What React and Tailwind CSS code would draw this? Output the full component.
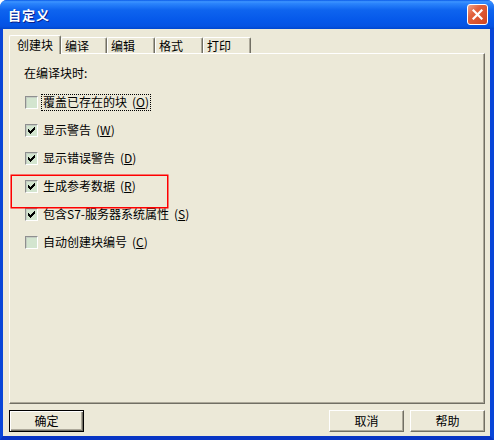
import React from "react";

const FONT = { fontFamily: '"Noto Sans CJK SC", "Noto Sans", sans-serif' };

function Check() {
  const cols = [
    [3, 5], [4, 6], [5, 7], [6, 6], [7, 5], [8, 4], [9, 3],
  ];
  return (
    <svg width="13" height="13" viewBox="0 0 13 13" className="absolute left-[-1px] top-[-1px]" shapeRendering="crispEdges">
      {cols.map(([x, y]) => (
        <rect key={x} x={x} y={y} width="1" height="3" fill="#000" />
      ))}
    </svg>
  );
}

function Box({ checked }) {
  return (
    <div className="relative w-[13px] h-[13px] shrink-0 border border-t-[#8e8f8f] border-l-[#8e8f8f] border-r-white border-b-white bg-[#d3e5cf] shadow-[inset_1px_1px_0_#c4cdc2]">
      {checked && <Check />}
    </div>
  );
}

function Row({ checked, label, k, focus }) {
  return (
    <div className="h-[28px] flex items-center pl-[15px]">
      <Box checked={checked} />
      <div
        className={
          "ml-[4px] h-[15px] flex items-center px-[1px] leading-none " +
          (focus ? "outline-1 outline-dotted outline-black" : "")
        }
      >
        <span>{label}</span>
        <span className="ml-[5px]">
          (<u>{k}</u>)
        </span>
      </div>
    </div>
  );
}

function Tab({ label, selected, w }) {
  return (
    <div
      className={
        "relative flex items-center border-t border-l border-white border-r border-r-[#716f64] rounded-tl-[2px] rounded-tr-[2px] bg-[#ece9d8] " +
        (selected
          ? "h-[19px] -mb-px z-10 pl-[7px] shadow-[inset_-1px_0_0_#aca899]"
          : "h-[16px] pl-[3px] shadow-[inset_-1px_0_0_#aca899]")
      }
      style={{ width: w }}
    >
      <span className="text-[12px] leading-none">{label}</span>
    </div>
  );
}

function Btn({ label, def }) {
  return (
    <div
      className={
        "w-[75px] h-[22px] flex items-center justify-center text-[12px] leading-none " +
        (def
          ? "border border-black shadow-[inset_1px_1px_0_#fff,inset_-1px_-1px_0_#716f64,inset_-2px_-2px_0_#aca899]"
          : "border border-t-white border-l-white border-r-[#716f64] border-b-[#716f64] shadow-[inset_-1px_-1px_0_#aca899]")
      }
    >
      {label}
    </div>
  );
}

export default function App() {
  return (
    <div className="w-[494px] h-[440px] bg-white overflow-hidden text-black" style={FONT}>
      <div className="w-[494px] h-[440px] flex flex-col rounded-t-[7px] overflow-hidden bg-[#0a4fe0]">
        {/* title bar */}
        <div className="h-[29px] shrink-0 flex items-center justify-between pl-[8px] pr-[6px] bg-[linear-gradient(to_bottom,#0a5ae8_0%,#3d95ff_6%,#2b84fb_12%,#0e64ef_35%,#0558ea_70%,#0553e3_90%,#0046cf_100%)]">
          <span className="text-white font-bold text-[13px] leading-none [text-shadow:1px_1px_0_#0a1e8a] tracking-[1px]">自定义</span>
          <div className="w-[21px] h-[21px] rounded-[3px] border border-white bg-[linear-gradient(135deg,#f0a48a_0%,#e2613d_35%,#cf4520_100%)] flex items-center justify-center">
            <svg width="11" height="11" viewBox="0 0 11 11">
              <path d="M1.5 1.5 L9.5 9.5 M9.5 1.5 L1.5 9.5" stroke="#fff" strokeWidth="2.2" strokeLinecap="square" />
            </svg>
          </div>
        </div>
        {/* body */}
        <div className="flex-1 flex flex-col bg-[#ece9d8] border-l-[3px] border-l-[#0845d8] border-r-[4px] border-r-[#0845d8] border-b-[4px] border-b-[#0734c4] pl-[6px] pr-[5px] pt-[6px]">
          <div className="h-[18px] flex items-end">
            <Tab label="创建块" selected w={52} />
            <Tab label="编译" w={46} />
            <Tab label="编辑" w={48} />
            <Tab label="格式" w={48} />
            <Tab label="打印" w={48} />
          </div>
          <div className="relative h-[351px] border-t border-l border-white border-r border-r-[#716f64] border-b border-b-[#716f64] shadow-[inset_-1px_-1px_0_#aca899] pt-[12px] text-[12px]">
            <div className="h-[14px] flex items-center pl-[14px] leading-none">在编译块时:</div>
            <div className="mt-[8px] flex flex-col">
              <Row checked={false} label="覆盖已存在的块" k="O" focus />
              <Row checked label="显示警告" k="W" />
              <Row checked label="显示错误警告" k="D" />
              <Row checked label="生成参考数据" k="R" />
              <Row checked label="包含S7-服务器系统属性" k="S" />
              <Row checked={false} label="自动创建块编号" k="C" />
            </div>
            <div className="absolute left-[2px] top-[122px] w-[155px] h-[31px] shadow-[0_0_0_1.5px_#ff0000]" />
          </div>
          <div className="mt-[6px] h-[22px] flex justify-between">
            <Btn label="确定" def />
            <div className="flex gap-[6px]">
              <Btn label="取消" />
              <Btn label="帮助" />
            </div>
          </div>
        </div>
      </div>
    </div>
  );
}
